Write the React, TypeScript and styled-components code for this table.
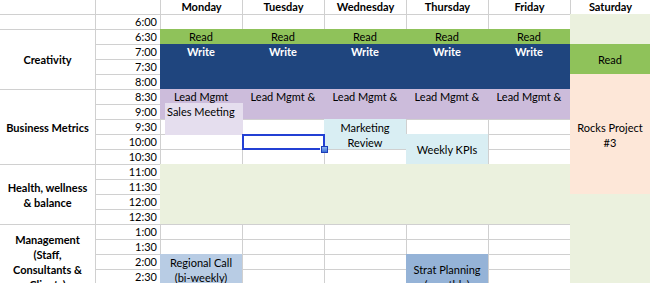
import React from 'react';
import styled, { createGlobalStyle } from 'styled-components';

const GlobalStyle = createGlobalStyle`
  html, body {
    margin: 0;
    padding: 0;
    background: #ffffff;
    overflow: hidden;
  }
  body {
    font-family: Lato, 'Liberation Sans', sans-serif;
    font-size: 11px;
    color: #000000;
  }
`;

const GRID = '#d0d0d0';

const TIMES = [
  '6:00', '6:30', '7:00', '7:30', '8:00', '8:30', '9:00', '9:30', '10:00', '10:30',
  '11:00', '11:30', '12:00', '12:30', '1:00', '1:30', '2:00', '2:30', '3:00',
];

const DAYS = ['Monday', 'Tuesday', 'Wednesday', 'Thursday', 'Friday', 'Saturday'];

const CATEGORIES = [
  { lines: [] as string[], start: 0, span: 1 },
  { lines: ['Creativity'], start: 1, span: 4 },
  { lines: ['Business Metrics'], start: 5, span: 5 },
  { lines: ['Health, wellness', '& balance'], start: 10, span: 4 },
  { lines: ['Management', '(Staff,', 'Consultants &', 'Clients)'], start: 14, span: 5 },
];

const colors = {
  green: '#8fc25a',
  navy: '#1f457e',
  lavender: '#ccbcdb',
  lilac: '#e5deee',
  aqua: '#d9eef3',
  sage: '#ebf1de',
  peach: '#fde7d8',
  sky: '#b8cce4',
  steel: '#95b3d7',
};

type BlockDef = {
  day: number;
  row: number;
  span: number;
  bg: string;
  lines?: string[];
  center?: boolean;
  light?: boolean;
};

const weekdays = [0, 1, 2, 3, 4];

const BLOCKS: BlockDef[] = [
  ...weekdays.map((d) => ({ day: d, row: 1, span: 1, bg: colors.green, lines: ['Read'] })),
  ...weekdays.map((d) => ({ day: d, row: 2, span: 3, bg: colors.navy, lines: ['Write'], light: true })),
  ...weekdays.map((d) => ({
    day: d,
    row: 5,
    span: 2,
    bg: colors.lavender,
    lines: [d === 0 ? 'Lead Mgmt' : 'Lead Mgmt &'],
  })),
  { day: 2, row: 7, span: 2, bg: colors.aqua, lines: ['Marketing', 'Review'], center: true },
  { day: 3, row: 8, span: 2, bg: colors.aqua, lines: ['Weekly KPIs'], center: true },
  ...weekdays.map((d) => ({ day: d, row: 10, span: 4, bg: colors.sage })),
  { day: 0, row: 16, span: 2, bg: colors.sky, lines: ['Regional Call', '(bi-weekly)'], center: true },
  { day: 3, row: 16, span: 3, bg: colors.steel, lines: ['Strat Planning', '(monthly)'], center: true },
  { day: 5, row: 0, span: 2, bg: colors.sage },
  { day: 5, row: 2, span: 2, bg: colors.green, lines: ['Read'], center: true },
  { day: 5, row: 4, span: 8, bg: colors.peach, lines: ['Rocks Project', '#3'], center: true },
  { day: 5, row: 12, span: 7, bg: colors.sage },
];

const Sheet = styled.div`
  display: grid;
  grid-template-columns: 95px 65px repeat(5, 82px) 1fr;
  grid-template-rows: 14px repeat(19, 15px);
  width: 650px;
`;

const HeaderCell = styled.div<{ $col: number }>`
  grid-row: 1;
  grid-column: ${(p) => p.$col};
  border-left: ${(p) => (p.$col > 1 ? `1px solid ${GRID}` : 'none')};
  font-weight: 700;
  line-height: 14px;
  text-align: center;
  white-space: nowrap;
  overflow: hidden;
`;

const CategoryCell = styled.div<{ $row: number; $span: number }>`
  grid-column: 1;
  grid-row: ${(p) => p.$row + 2} / span ${(p) => p.$span};
  border-top: 1px solid ${GRID};
  display: flex;
  flex-direction: column;
  align-items: center;
  justify-content: center;
  font-weight: 700;
  line-height: 15px;
  text-align: center;
  white-space: nowrap;
`;

const TimeCell = styled.div<{ $row: number }>`
  grid-column: 2;
  grid-row: ${(p) => p.$row + 2};
  border-top: 1px solid ${GRID};
  border-left: 1px solid ${GRID};
  line-height: 14px;
  text-align: right;
  padding-right: 3px;
`;

const DayCell = styled.div<{ $row: number; $col: number }>`
  grid-column: ${(p) => p.$col};
  grid-row: ${(p) => p.$row + 2};
  border-top: 1px solid ${GRID};
  border-left: 1px solid ${GRID};
`;

const Block = styled.div<{
  $row: number;
  $col: number;
  $span: number;
  $bg: string;
  $center?: boolean;
  $light?: boolean;
}>`
  grid-column: ${(p) => p.$col};
  grid-row: ${(p) => p.$row + 2} / span ${(p) => p.$span};
  background: ${(p) => p.$bg};
  color: ${(p) => (p.$light ? '#ffffff' : '#000000')};
  font-weight: ${(p) => (p.$light ? 700 : 400)};
  display: flex;
  flex-direction: column;
  align-items: center;
  justify-content: ${(p) => (p.$center ? 'center' : 'flex-start')};
  padding-top: ${(p) => (p.$center ? '1px' : '1px')};
  line-height: ${(p) => (p.$center ? '15px' : '14px')};
  white-space: nowrap;
  overflow: hidden;
`;

const NoteBox = styled.div`
  grid-column: 3;
  grid-row: 8 / span 2;
  margin: -1px -1px -1px 5px;
  background: ${colors.lilac};
  line-height: 15px;
  padding: 1px 0 0 2px;
  white-space: nowrap;
`;

const Selection = styled.div`
  grid-column: 4;
  grid-row: 10;
  margin: 0 -1px -1px 0;
  border: 2px solid #2340d4;
  position: relative;
`;

const FillHandle = styled.span`
  position: absolute;
  right: -5px;
  bottom: -5px;
  width: 5px;
  height: 5px;
  background: linear-gradient(#8fb6f0, #3a6fd8);
  border: 1px solid #1d3db8;
  box-shadow: -1px 0 0 #ffffff;
`;

export default function App() {
  return (
    <>
      <GlobalStyle />
      <Sheet>
        <HeaderCell $col={1} />
        <HeaderCell $col={2} />
        {DAYS.map((day, i) => (
          <HeaderCell key={day} $col={i + 3}>
            {day}
          </HeaderCell>
        ))}

        {CATEGORIES.map((c) => (
          <CategoryCell key={c.start} $row={c.start} $span={c.span}>
            {c.lines.map((l) => (
              <span key={l}>{l}</span>
            ))}
          </CategoryCell>
        ))}

        {TIMES.map((t, r) => (
          <React.Fragment key={t}>
            <TimeCell $row={r}>{t}</TimeCell>
            {weekdays.map((d) => (
              <DayCell key={d} $row={r} $col={d + 3} />
            ))}
          </React.Fragment>
        ))}

        {BLOCKS.map((b, i) => (
          <Block
            key={i}
            $row={b.row}
            $col={b.day + 3}
            $span={b.span}
            $bg={b.bg}
            $center={b.center}
            $light={b.light}
          >
            {(b.lines || []).map((l) => (
              <span key={l}>{l}</span>
            ))}
          </Block>
        ))}

        <NoteBox>Sales Meeting</NoteBox>

        <Selection>
          <FillHandle />
        </Selection>
      </Sheet>
    </>
  );
}
